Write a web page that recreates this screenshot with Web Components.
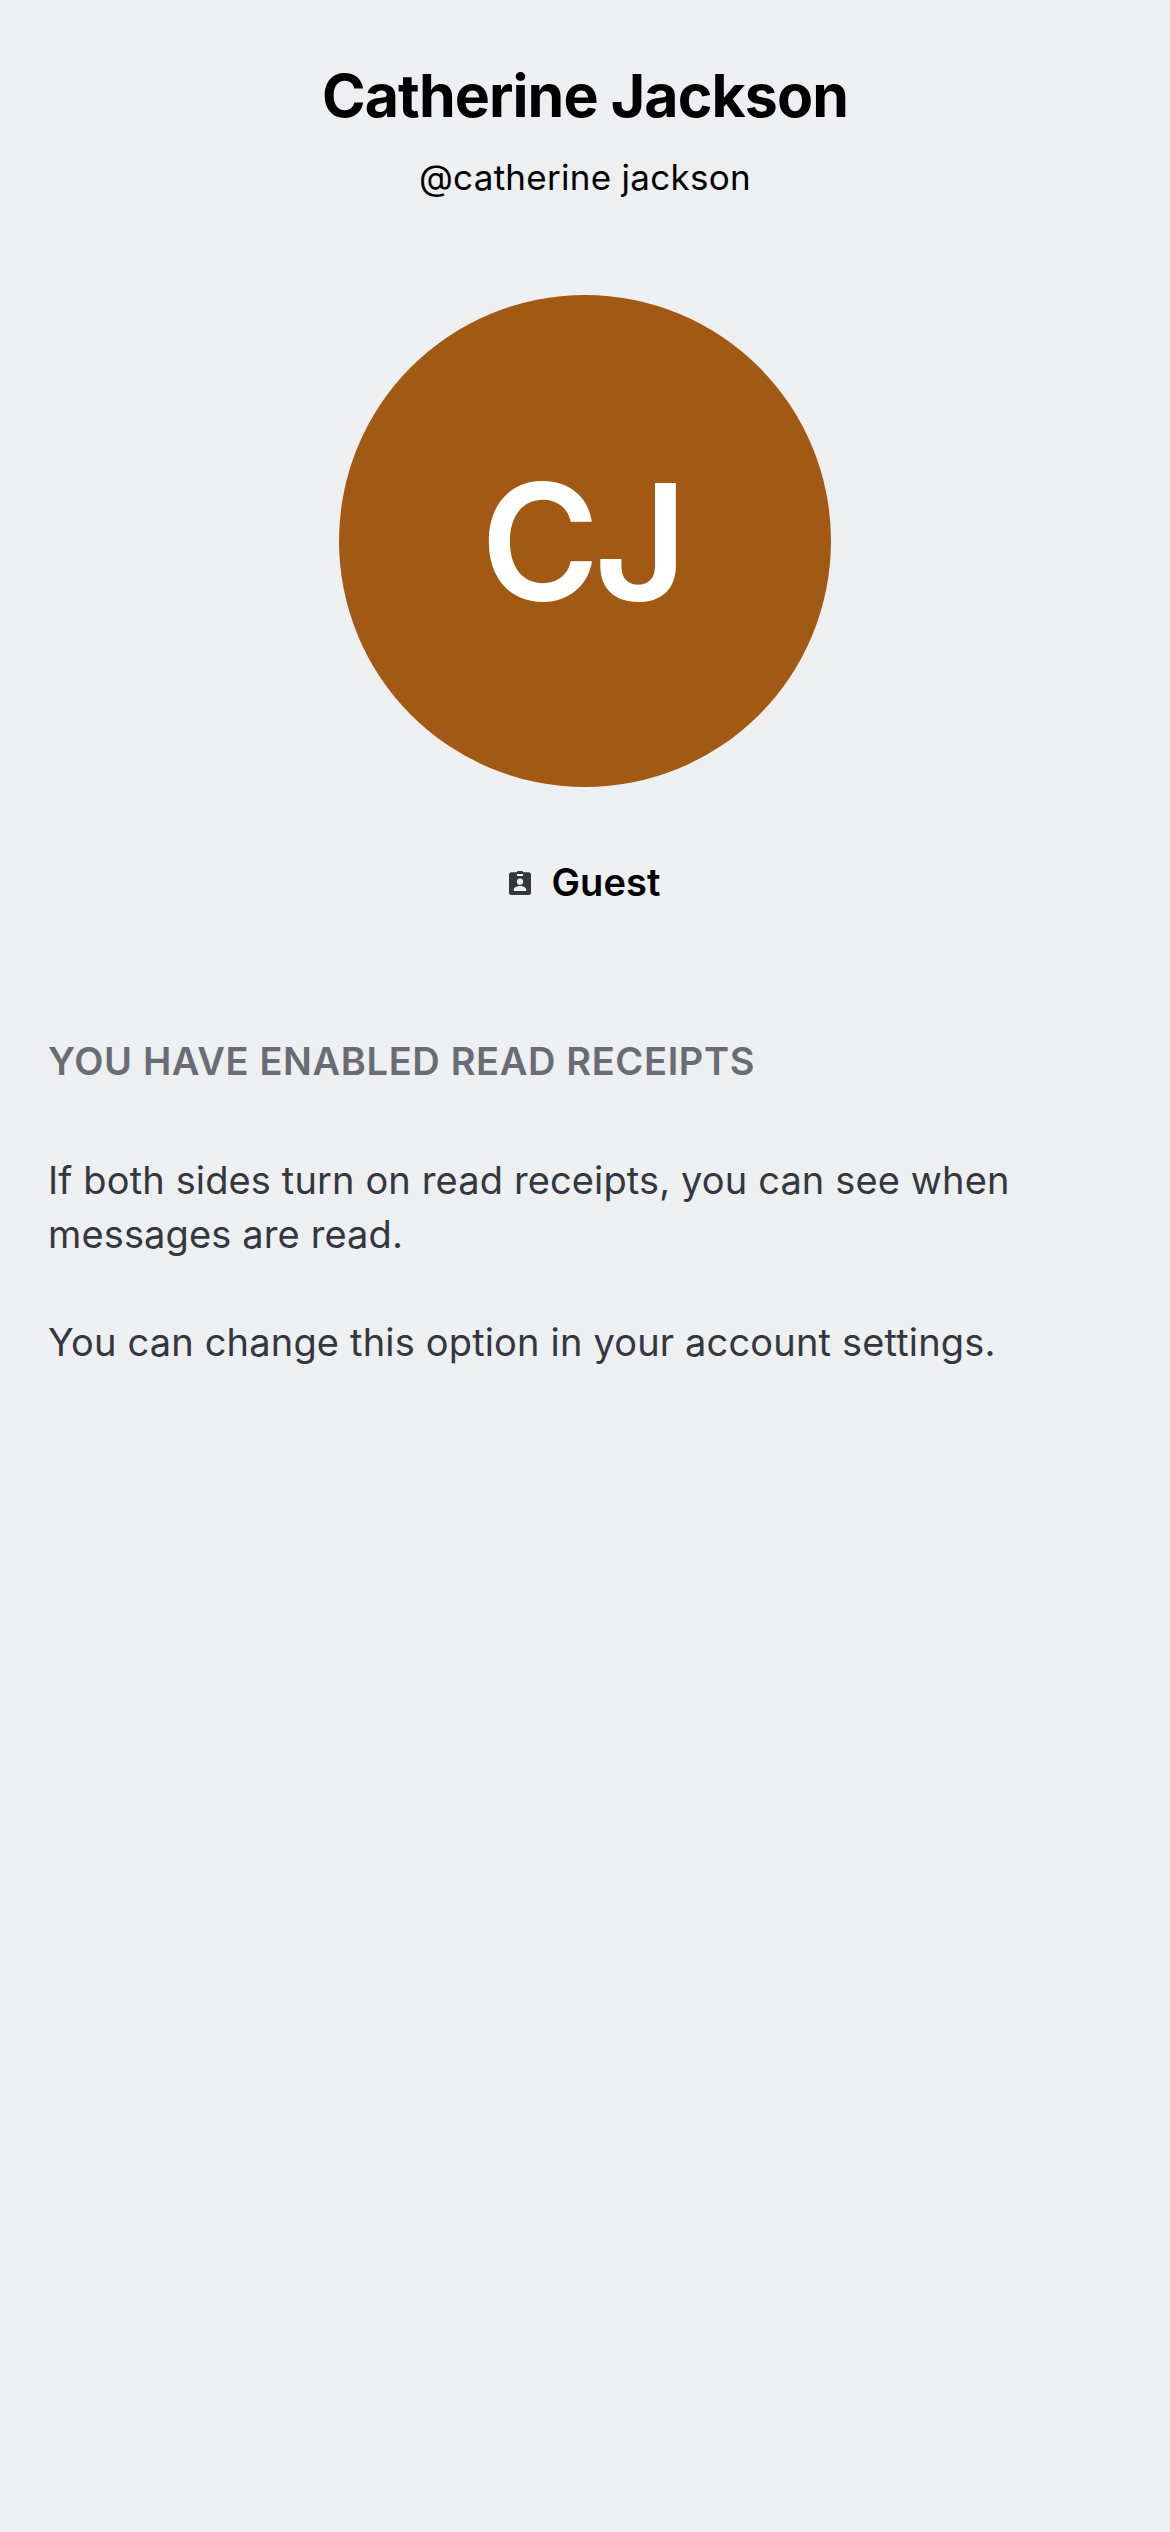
<!DOCTYPE html>
<html lang="en"><head><meta charset="utf-8"><title>Profile</title>
<style>html,body{margin:0;background:#edeff0}body{font-family:Inter,"Liberation Sans",sans-serif}</style></head>
<body>
<guest-profile></guest-profile>
<script>
const define=(name,html)=>customElements.define(name,class extends HTMLElement{constructor(){super();this.attachShadow({mode:"open"}).innerHTML=html}});
define("profile-heading",`<style>
:host{display:flex;flex-direction:column;align-items:center;padding-top:59px}
h1{margin:0;font-size:59px;line-height:74px;font-weight:700;letter-spacing:-.91px;color:#000;white-space:nowrap}
p{margin:22px 0 0;font-size:35px;line-height:44px;letter-spacing:.28px;color:#000;white-space:nowrap}
</style><h1><slot name="name"></slot></h1><p><slot name="handle"></slot></p>`);
define("profile-avatar",`<style>
:host{display:flex;box-sizing:border-box;align-items:center;justify-content:center;width:492px;height:492px;margin:96px auto 0;padding-right:7px;border-radius:50%;background:#a25914;color:#fff;font-size:161px;font-weight:600;letter-spacing:-5.2px;line-height:1}
</style><span><slot></slot></span>`);
define("guest-badge",`<style>
:host{display:flex;align-items:center;justify-content:center;gap:20px;margin-top:70px;height:50px;font-size:38px;line-height:50px;font-weight:600;letter-spacing:.15px;color:#000}
svg{width:22px;height:24px;margin-top:2px;display:block;flex:none}
</style><svg viewBox="0 0 22 24"><path fill="#34373f" fill-rule="evenodd" d="M2.5 1.3H7.5Q8 0 9.3 0H12.7Q14 0 14.5 1.3H19.5Q22 1.3 22 3.8V21.5Q22 24 19.5 24H2.5Q0 24 0 21.5V3.8Q0 1.3 2.5 1.3ZM8 3V5H14V3ZM11 7.6A3.1 3.1 0 1 0 11 13.8A3.1 3.1 0 1 0 11 7.6ZM4.8 20H17.2V18.5C17.2 16.2 13.8 15 11 15S4.8 16.2 4.8 18.5Z"/></svg><span><slot></slot></span>`);
define("receipt-info",`<style>
:host{display:block;padding:127px 48px 0;color:#34373f;font-size:38px;line-height:54px;letter-spacing:.13px}
h2{margin:0;font-size:38px;line-height:54px;font-weight:600;letter-spacing:.64px;color:#696c74;white-space:nowrap}
div{margin-top:65px}
</style><h2><slot name="title"></slot></h2><div><slot></slot></div>`);
define("guest-profile",`<style>:host{display:block;min-height:2532px;background:#edeff0}p{margin:0 0 54px;white-space:nowrap}p:last-child{letter-spacing:.17px}</style>
<profile-heading><span slot="name">Catherine Jackson</span><span slot="handle">@catherine jackson</span></profile-heading>
<profile-avatar>CJ</profile-avatar><guest-badge>Guest</guest-badge>
<receipt-info><span slot="title">YOU HAVE ENABLED READ RECEIPTS</span><p>If both sides turn on read receipts, you can see when<br>messages are read.</p><p>You can change this option in your account settings.</p></receipt-info>`);
</script></body></html>
